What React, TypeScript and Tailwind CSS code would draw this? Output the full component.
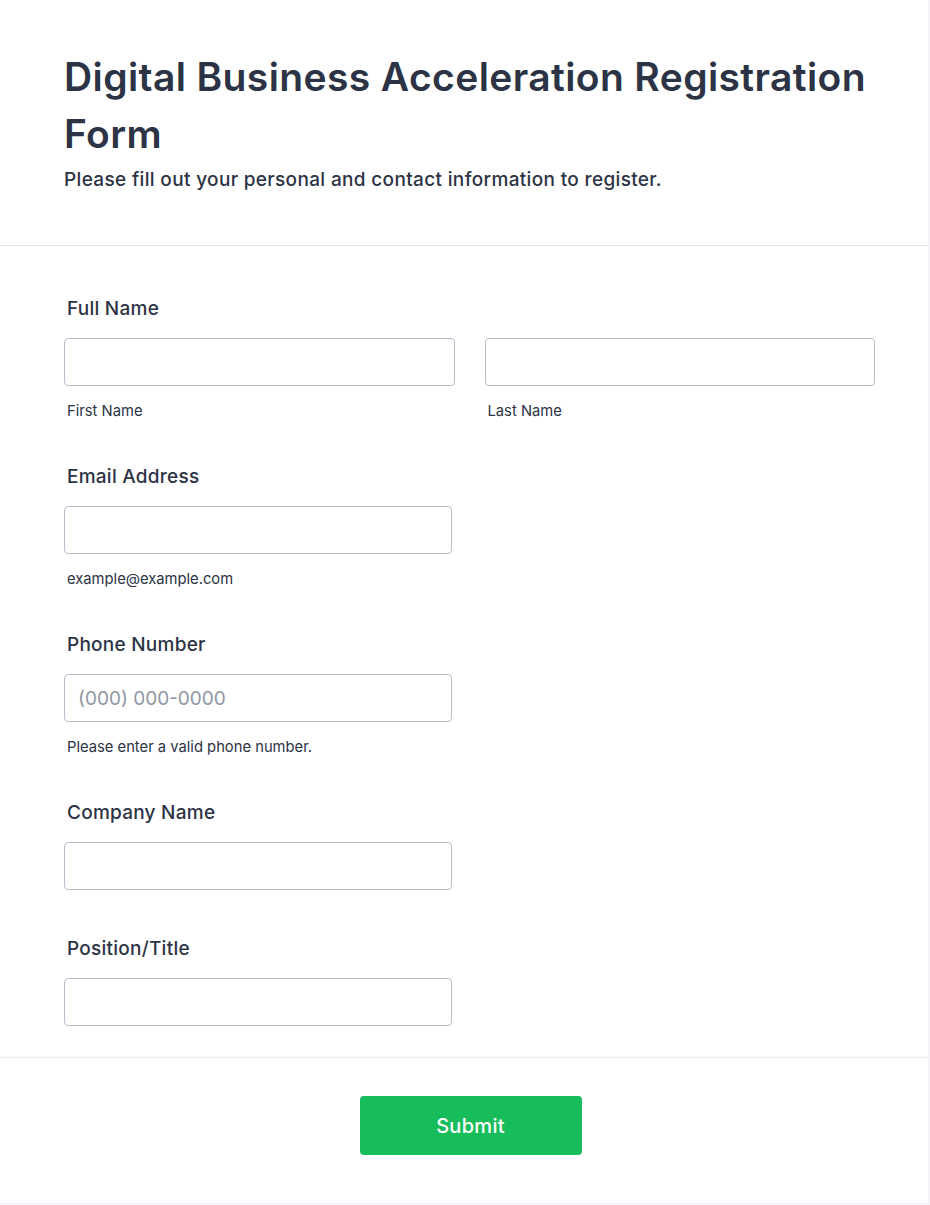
import React from "react";

function Label({ children }: { children: React.ReactNode }) {
  return (
    <div className="text-[19px] leading-[24px] font-medium text-[#2c3345] pl-[3px] mb-[17px] tracking-[0.013em]">
      {children}
    </div>
  );
}

function Sub({ children }: { children: React.ReactNode }) {
  return (
    <div className="text-[14.75px] leading-[20px] text-[#2c3345] pl-[3px] mt-[15px]">{children}</div>
  );
}

function Input({ placeholder }: { placeholder?: string }) {
  return (
    <input
      type="text"
      placeholder={placeholder}
      className="w-full h-[48px] rounded-[4px] border border-[#b8bdc9] bg-white px-[13px] text-[19px] text-[#2c3345] placeholder:text-[#8f96a3] outline-none"
    />
  );
}

export default function App() {
  return (
    <div
      className="w-[930px] min-h-[1205px] bg-[#f8f9fc]"
      style={{ fontFamily: "Inter, 'Noto Sans', sans-serif" }}
    >
      <div className="w-[929px] h-[1204px] bg-white border-r border-b border-[#eef0f5] flex flex-col">
        <div className="px-[64px] pt-[48px] pb-[51px] border-b border-[#dfe1e8]">
          <h1 className="text-[39px] leading-[57px] font-semibold text-[#2c3345] tracking-[0.01em] mr-[-8px]">
            Digital Business Acceleration Registration Form
          </h1>
          <p className="text-[19px] leading-[28px] font-medium text-[#2c3345] mt-[4px] tracking-[0.018em]">
            Please fill out your personal and contact information to register.
          </p>
        </div>
        <div className="px-[64px] pt-[51px] pb-[31px] border-b border-[#eceef3]">
          <div className="mb-[44px]">
            <Label>Full Name</Label>
            <div className="flex gap-[30px] w-[811px]">
              <div className="flex-1">
                <Input />
                <Sub>First Name</Sub>
              </div>
              <div className="flex-1">
                <Input />
                <Sub>Last Name</Sub>
              </div>
            </div>
          </div>
          <div className="mb-[44px] w-[388px]">
            <Label>Email Address</Label>
            <Input />
            <Sub>example@example.com</Sub>
          </div>
          <div className="mb-[44px] w-[388px]">
            <Label>Phone Number</Label>
            <Input placeholder="(000) 000-0000" />
            <Sub>Please enter a valid phone number.</Sub>
          </div>
          <div className="mb-[47px] w-[388px]">
            <Label>Company Name</Label>
            <Input />
          </div>
          <div className="w-[388px]">
            <Label>Position/Title</Label>
            <Input />
          </div>
        </div>
        <div className="flex justify-center pt-[38px] pl-[13px]">
          <button className="w-[222px] h-[59px] rounded-[4px] bg-[#18bd5b] text-white text-[20px] font-medium tracking-[0.015em]">
            Submit
          </button>
        </div>
      </div>
    </div>
  );
}
